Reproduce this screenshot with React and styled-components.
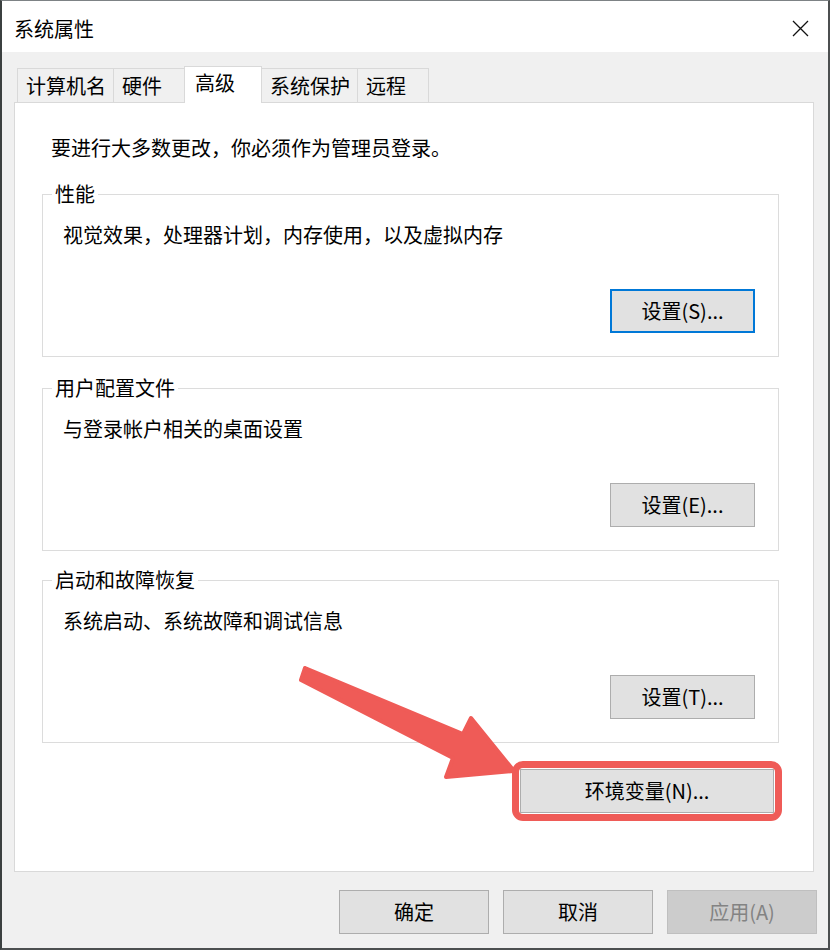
import React from "react";
import styled, { createGlobalStyle } from "styled-components";

const GlobalStyle = createGlobalStyle`
  html, body {
    margin: 0;
    padding: 0;
    background: #fff;
  }
`;

const uiFont = `"Noto Sans CJK SC", "Noto Sans", sans-serif`;

const Window = styled.div`
  position: relative;
  box-sizing: border-box;
  width: 830px;
  height: 950px;
  display: flex;
  flex-direction: column;
  background: #f0f0f0;
  border-style: solid;
  border-width: 1px 2px 2px 2px;
  border-color: #7d8285 #4c4f50 #4c4f50 #3b4040;
  font-family: ${uiFont};
  color: #000;
  overflow: hidden;
`;

const TitleBar = styled.div`
  flex: none;
  box-sizing: border-box;
  height: 51px;
  background: #fff;
  display: flex;
  align-items: center;
  justify-content: space-between;
  padding: 4px 0 0 12px;
`;

const Title = styled.span`
  font-size: 20px;
  line-height: 26px;
`;

const CloseButton = styled.button`
  width: 56px;
  height: 46px;
  padding: 0;
  border: none;
  background: transparent;
  display: flex;
  align-items: center;
  justify-content: center;
`;

const Body = styled.div`
  flex: 1;
  display: flex;
  flex-direction: column;
  padding: 14px 14px 0 12px;
`;

const TabStrip = styled.div`
  display: flex;
  align-items: flex-end;
  height: 36px;
  padding-left: 3px;
  position: relative;
  z-index: 1;
`;

const Tab = styled.div`
  box-sizing: border-box;
  height: ${(p) => (p.$active ? "37px" : "34px")};
  min-width: ${(p) => (p.$active ? "78px" : "72px")};
  margin: 0 0 ${(p) => (p.$active ? "-1px" : "0")} -1px;
  padding: 0 7px 0 ${(p) => (p.$active ? "10px" : "8px")};
  border: 1px solid #d9d9d9;
  border-bottom: none;
  background: ${(p) => (p.$active ? "#fff" : "#f0f0f0")};
  position: relative;
  z-index: ${(p) => (p.$active ? 2 : 1)};
  font-size: 20px;
  line-height: ${(p) => (p.$active ? "31px" : "33px")};
  white-space: nowrap;

  &:first-child {
    margin-left: 0;
  }
`;

const Panel = styled.div`
  box-sizing: border-box;
  height: 770px;
  border: 1px solid #d9d9d9;
  background: #fff;
  padding: 32px 34px 0 27px;
  display: flex;
  flex-direction: column;
`;

const Notice = styled.div`
  margin-left: 9px;
  font-size: 20px;
  line-height: 26px;
`;

const Group = styled.fieldset`
  margin: ${(p) => p.$gap}px 0 0;
  padding: 0 23px 23px 0;
  border: 1px solid #dcdcdc;
  min-width: 0;
  display: flex;
  flex-direction: column;
`;

const Legend = styled.legend`
  margin-left: 9px;
  padding: 0 3px;
  font-size: 20px;
  line-height: 26px;
`;

const Description = styled.div`
  margin-top: 15px;
  padding-left: 20px;
  font-size: 20px;
  line-height: 26px;
`;

const ButtonRow = styled.div`
  display: flex;
  justify-content: flex-end;
  margin-top: 41px;
`;

const Button = styled.button`
  box-sizing: border-box;
  width: ${(p) => p.$width || 145}px;
  height: 44px;
  padding: 0;
  font-family: ${uiFont};
  font-size: 20px;
  line-height: 26px;
  color: ${(p) => (p.disabled ? "#838383" : "#000")};
  background: ${(p) => (p.disabled ? "#cccccc" : "#e1e1e1")};
  border: ${(p) =>
    p.$focused ? "2px solid #0078d7" : p.disabled ? "1px solid #bfbfbf" : "1px solid #adadad"};
`;

const EnvRow = styled.div`
  display: flex;
  justify-content: flex-end;
  margin: 18px -3px 0 0;
`;

const Highlight = styled.span`
  display: inline-flex;
  padding: 1px;
  border: 7px solid #ef5b57;
  border-radius: 11px;
`;

const Footer = styled.div`
  display: flex;
  justify-content: flex-end;
  gap: 14px;
  margin: 18px -3px 0 0;
`;

const ArrowLayer = styled.svg`
  position: absolute;
  top: -1px;
  left: -2px;
  pointer-events: none;
  z-index: 5;
`;

const tabs = ["计算机名", "硬件", "高级", "系统保护", "远程"];

const groups = [
  { title: "性能", text: "视觉效果，处理器计划，内存使用，以及虚拟内存", action: "设置(S)...", gap: 20, focused: true },
  { title: "用户配置文件", text: "与登录帐户相关的桌面设置", action: "设置(E)...", gap: 18 },
  { title: "启动和故障恢复", text: "系统启动、系统故障和调试信息", action: "设置(T)...", gap: 16 },
];

export default function App() {
  return (
    <>
      <GlobalStyle />
      <Window>
        <TitleBar>
          <Title>系统属性</Title>
          <CloseButton aria-label="关闭">
            <svg width="17" height="17" viewBox="0 0 17 17">
              <path d="M1 1 L16 16 M16 1 L1 16" stroke="#111" strokeWidth="1.3" fill="none" />
            </svg>
          </CloseButton>
        </TitleBar>

        <Body>
          <TabStrip>
            {tabs.map((t) => (
              <Tab key={t} $active={t === "高级"}>
                {t}
              </Tab>
            ))}
          </TabStrip>

          <Panel>
            <Notice>要进行大多数更改，你必须作为管理员登录。</Notice>

            {groups.map((g) => (
              <Group key={g.title} $gap={g.gap}>
                <Legend>{g.title}</Legend>
                <Description>{g.text}</Description>
                <ButtonRow>
                  <Button $focused={g.focused}>{g.action}</Button>
                </ButtonRow>
              </Group>
            ))}

            <EnvRow>
              <Highlight>
                <Button $width={254}>环境变量(N)...</Button>
              </Highlight>
            </EnvRow>
          </Panel>

          <Footer>
            <Button $width={150}>确定</Button>
            <Button $width={150}>取消</Button>
            <Button $width={150} disabled>
              应用(A)
            </Button>
          </Footer>
        </Body>

        {/* red pointer aimed at the environment variables button */}
        <ArrowLayer width="830" height="950" viewBox="0 0 830 950">
          <polygon
            points="305,668 463,734 471,718 514,771 446,777 453,758 301,680"
            fill="#ef5b57"
            stroke="#ef5b57"
            strokeWidth="4"
            strokeLinejoin="round"
          />
        </ArrowLayer>
      </Window>
    </>
  );
}
